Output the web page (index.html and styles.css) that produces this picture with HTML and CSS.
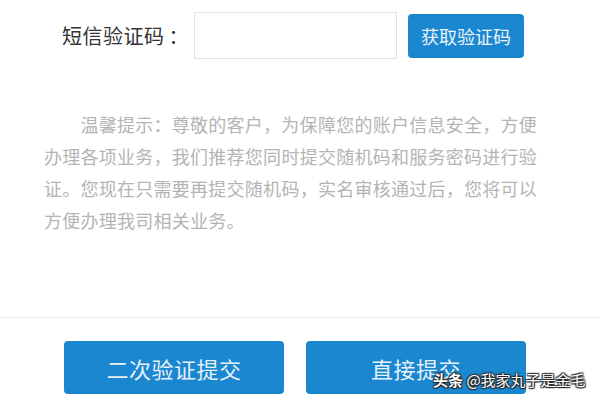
FILE: index.html
```html
<!DOCTYPE html>
<html lang="zh-CN">
<head>
<meta charset="utf-8">
<link rel="stylesheet" href="styles.css">
</head>
<body>
<div class="page">
  <div class="code-row">
    <span class="label">短信验证码<span class="colon">：</span></span>
    <div class="input"></div>
    <button class="get-code">获取验证码</button>
  </div>
  <p class="tip">温馨提示：尊敬的客户，为保障您的账户信息安全，方便办理各项业务，我们推荐您同时提交随机码和服务密码进行验证。您现在只需要再提交随机码，实名审核通过后，您将可以方便办理我司相关业务。</p>
  <div class="divider"></div>
  <div class="actions">
    <button class="btn">二次验证提交</button>
    <button class="btn">直接提交</button>
  </div>
  <div class="watermark"><b>头条</b> @我家丸子是金毛</div>
</div>
</body>
</html>
```
FILE: styles.css
```css
html, body {
  margin: 0;
  padding: 0;
  background: #fff;
}
.page {
  position: relative;
  width: 600px;
  height: 400px;
  overflow: hidden;
  font-family: "Noto Sans CJK SC", "Noto Sans", sans-serif;
}
.code-row {
  display: flex;
  align-items: center;
  padding: 12px 0 0 62px;
  height: 47px;
}
.label {
  font-size: 20px;
  color: #333;
  width: 120px;
  margin-right: 12px;
  white-space: nowrap;
  letter-spacing: 0.5px;
}
.colon {
  font-family: "Noto Sans CJK TC", sans-serif;
  margin-left: 4px;
}
.input {
  box-sizing: border-box;
  width: 203px;
  height: 47px;
  border: 1px solid #e2e2e2;
  box-shadow: inset 0 0 1px #eee;
  background: #fff;
}
.get-code {
  margin-left: 11px;
  width: 116px;
  height: 44px;
  border: none;
  border-radius: 4px;
  background: #1a87d0;
  color: #eaf3fa;
  font-family: inherit;
  font-size: 18px;
  padding: 0;
}
.tip {
  margin: 49px 0 0 44px;
  width: 497px;
  font-size: 18px;
  line-height: 32px;
  letter-spacing: 0.26px;
  text-indent: 36.5px;
  color: #b4b4b4;
}
.divider {
  margin-top: 81px;
  height: 1px;
  background: #ececec;
}
.actions {
  display: flex;
  gap: 22px;
  padding: 23px 0 0 64px;
}
.btn {
  width: 220px;
  height: 53px;
  border: none;
  border-radius: 4px;
  background: #1a87d0;
  color: #e6f1f9;
  font-family: inherit;
  font-size: 22px;
  padding: 0;
  letter-spacing: 0.5px;
}
.watermark {
  position: absolute;
  left: 433px;
  top: 370px;
  font-size: 15px;
  line-height: 20px;
  color: #fff;
  white-space: nowrap;
  text-shadow: 0 0 1px #222, 1px 1px 1px #222, -1px -1px 1px #333, 1px -1px 1px #333, -1px 1px 1px #333;
}
.watermark b {
  font-weight: 700;
}
```
